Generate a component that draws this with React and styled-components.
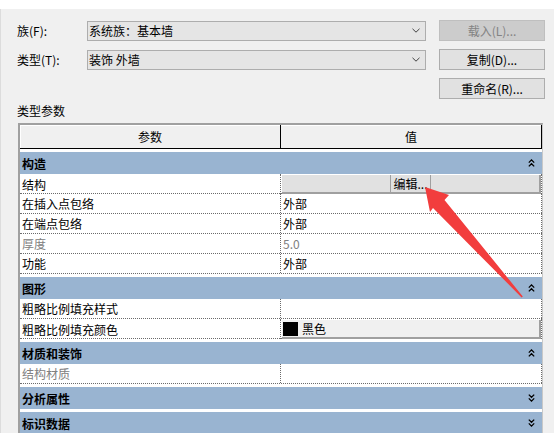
import React from "react";
import styled, { createGlobalStyle } from "styled-components";

const GlobalStyle = createGlobalStyle`
  html, body {
    margin: 0;
    padding: 0;
    background: #fff;
    overflow: hidden;
  }
  body {
    font-family: "Noto Sans CJK SC", "Noto Sans", sans-serif;
    font-size: 12px;
    color: #000;
  }
`;

const Page = styled.div`
  position: relative;
  width: 554px;
  height: 433px;
  padding-top: 9px;
  box-sizing: border-box;
`;

const Dialog = styled.div`
  height: 424px;
  box-sizing: border-box;
  background: #f0f0f0;
  border-left: 1px solid #dcdcdc;
  padding: 11px 0 0 16px;
  overflow: hidden;
`;

const FormGrid = styled.div`
  display: grid;
  grid-template-columns: 70px 339px 119px;
  grid-auto-rows: 21px;
  row-gap: 8px;
  align-items: center;
`;

const FieldLabel = styled.div`
  line-height: 14px;
  white-space: nowrap;
`;

const Select = styled.div`
  height: 20px;
  box-sizing: border-box;
  border: 1px solid #adadad;
  background: #e5e5e5;
  display: flex;
  align-items: center;
  justify-content: space-between;
  padding: 0 5px 0 1px;
  line-height: 14px;
`;

const Button = styled.button`
  grid-column: 3;
  justify-self: end;
  width: 106px;
  height: 21px;
  box-sizing: border-box;
  border: 1px solid ${(p) => (p.disabled ? "#bfbfbf" : "#adadad")};
  background: ${(p) => (p.disabled ? "#cccccc" : "#e1e1e1")};
  color: ${(p) => (p.disabled ? "#838383" : "#000")};
  font: inherit;
  line-height: 14px;
  padding: 0;
`;

const SectionLabel = styled.div`
  margin: 5px 0 5px;
  line-height: 14px;
`;

const Table = styled.div`
  margin-left: 1px;
  width: 525px;
  box-sizing: border-box;
  border-left: 2px solid #a0a0a0;
  border-top: 2px solid #a0a0a0;
  border-right: 1px solid #c8c8c8;
  background: #fff;
  height: 320px;
`;

const HeaderRow = styled.div`
  display: grid;
  grid-template-columns: 261px 261px;
  height: 24px;
  box-sizing: border-box;
  border-bottom: 1px solid #000;
  background: #f0f0f0;
  box-shadow: inset 1px 1px 0 #fff;
`;

const HeaderCell = styled.div`
  border-right: 1px solid #000;
  display: flex;
  align-items: center;
  justify-content: center;
`;

const GroupRow = styled.div`
  margin-top: 3px;
  height: 22px;
  background: #99b4d1;
  display: flex;
  align-items: center;
  justify-content: space-between;
  padding: 0 7px 0 2px;
  font-weight: bold;
`;

const Row = styled.div`
  display: grid;
  grid-template-columns: 260px 262px;
  height: 20px;
  box-sizing: border-box;
  border-bottom: 1px dotted #6a6a6a;
`;

const NameCell = styled.div`
  padding-left: 2px;
  display: flex;
  align-items: center;
  color: ${(p) => (p.muted ? "#808080" : "#000")};
`;

const ValueCell = styled.div`
  border-left: 1px dotted #6a6a6a;
  border-right: 1px dotted #6a6a6a;
  padding-left: 2px;
  display: flex;
  align-items: center;
  color: ${(p) => (p.muted ? "#808080" : "#000")};
`;

const CellButton = styled.div`
  flex: 1;
  align-self: stretch;
  margin: 1px 0 0 -1px;
  box-sizing: border-box;
  background: ${(p) => p.bg};
  border-right: 2px solid #a0a0a0;
  border-bottom: 2px solid #a0a0a0;
  display: flex;
  align-items: center;
  justify-content: ${(p) => (p.center ? "center" : "flex-start")};
`;

const EditPart = styled.div`
  align-self: stretch;
  display: flex;
  align-items: center;
  padding: 0 2px;
  border-left: 1px solid #a0a0a0;
  border-right: 1px solid #a0a0a0;
`;

const Swatch = styled.div`
  width: 15px;
  height: 14px;
  margin: 0 4px 0 1px;
  background: ${(p) => p.color};
`;

const Overlay = styled.svg`
  position: absolute;
  left: 0;
  top: 0;
  pointer-events: none;
`;

function Chevron({ open }) {
  return (
    <svg width="7" height="8" viewBox="0 0 7 8">
      <path
        d={open ? "M0.8 3.6 L3.5 0.9 L6.2 3.6 M0.8 7.4 L3.5 4.7 L6.2 7.4" : "M0.8 0.6 L3.5 3.3 L6.2 0.6 M0.8 4.4 L3.5 7.1 L6.2 4.4"}
        fill="none"
        stroke="#000"
        strokeWidth="1.3"
      />
    </svg>
  );
}

function SelectArrow() {
  return (
    <svg width="8" height="5" viewBox="0 0 8 5">
      <path d="M0.5 0.8 L4 4.2 L7.5 0.8" fill="none" stroke="#404040" strokeWidth="1" />
    </svg>
  );
}

const groups = [
  {
    name: "构造",
    open: true,
    rows: [
      { name: "结构", kind: "edit" },
      { name: "在插入点包络", value: "外部" },
      { name: "在端点包络", value: "外部" },
      { name: "厚度", value: "5.0", muted: true },
      { name: "功能", value: "外部" },
    ],
  },
  {
    name: "图形",
    open: true,
    rows: [
      { name: "粗略比例填充样式", value: "" },
      { name: "粗略比例填充颜色", kind: "color" },
    ],
  },
  {
    name: "材质和装饰",
    open: true,
    rows: [{ name: "结构材质", value: "", muted: true }],
  },
  { name: "分析属性", open: false, rows: [] },
  { name: "标识数据", open: false, rows: [] },
];

function Value({ row }) {
  if (row.kind === "edit") {
    return (
      <ValueCell>
        <CellButton bg="#e1e1e1" center>
          <EditPart>编辑...</EditPart>
        </CellButton>
      </ValueCell>
    );
  }
  if (row.kind === "color") {
    return (
      <ValueCell>
        <CellButton bg="#f0f0f0">
          <Swatch color="#000" />
          黑色
        </CellButton>
      </ValueCell>
    );
  }
  return <ValueCell muted={row.muted}>{row.value}</ValueCell>;
}

export default function App() {
  return (
    <Page>
      <GlobalStyle />
      <Dialog>
        <FormGrid>
          <FieldLabel>族(F):</FieldLabel>
          <Select>
            <span>系统族：基本墙</span>
            <SelectArrow />
          </Select>
          <Button disabled>载入(L)...</Button>
          <FieldLabel>类型(T):</FieldLabel>
          <Select>
            <span>装饰 外墙</span>
            <SelectArrow />
          </Select>
          <Button>复制(D)...</Button>
          <Button>重命名(R)...</Button>
        </FormGrid>
        <SectionLabel>类型参数</SectionLabel>
        <Table>
          <HeaderRow>
            <HeaderCell>参数</HeaderCell>
            <HeaderCell>值</HeaderCell>
          </HeaderRow>
          {groups.map((g) => (
            <React.Fragment key={g.name}>
              <GroupRow>
                <span>{g.name}</span>
                <Chevron open={g.open} />
              </GroupRow>
              {g.rows.map((r) => (
                <Row key={r.name}>
                  <NameCell muted={r.muted}>{r.name}</NameCell>
                  <Value row={r} />
                </Row>
              ))}
            </React.Fragment>
          ))}
        </Table>
      </Dialog>
      <Overlay width="554" height="433" viewBox="0 0 554 433">
        <polygon
          points="425,187 449,195 444.5,200 522.8,296.4 521.6,297.6 433,208 430,212"
          fill="#f23d3d"
        />
      </Overlay>
    </Page>
  );
}
